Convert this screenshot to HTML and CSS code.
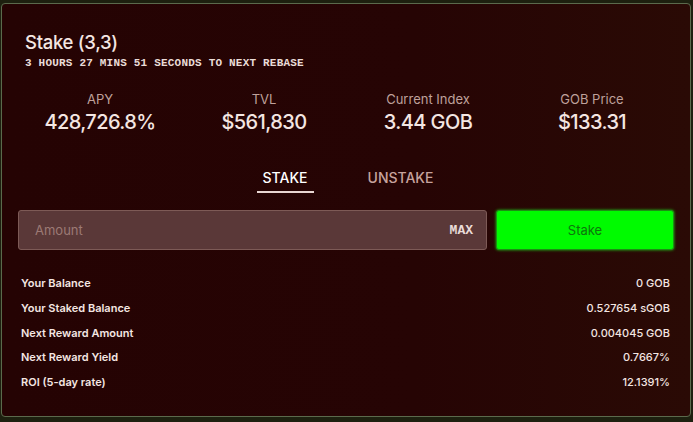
FILE: index.html
```html
<!DOCTYPE html>
<html lang="en">
<head>
    <meta charset="UTF-8">
    <meta name="viewport" content="width=device-width, initial-scale=1.0">
    <title>Stake</title>
    <link rel="stylesheet" href="styles.css">
</head>
<body>
    <div id="stake-card">
        <div class="card-header">
            <div class="card-title">Stake (3,3)</div>
            <div class="rebase-timer">3 HOURS 27 MINS 51 SECONDS TO NEXT REBASE</div>
        </div>

        <div class="metrics">
            <div class="metric">
                <div class="metric-label">APY</div>
                <div class="metric-value">428,726.8%</div>
            </div>
            <div class="metric">
                <div class="metric-label">TVL</div>
                <div class="metric-value">$561,830</div>
            </div>
            <div class="metric">
                <div class="metric-label">Current Index</div>
                <div class="metric-value">3.44 GOB</div>
            </div>
            <div class="metric">
                <div class="metric-label">GOB Price</div>
                <div class="metric-value">$133.31</div>
            </div>
        </div>

        <div class="tabs">
            <div class="tab active-tab">STAKE</div>
            <div class="tab">UNSTAKE</div>
        </div>

        <div class="stake-form">
            <div class="amount-box">
                <input type="text" id="amount-input" placeholder="Amount">
                <span class="max-button">MAX</span>
            </div>
            <button id="stake-button">Stake</button>
        </div>

        <div class="info-list">
            <div class="info-row"><span>Your Balance</span><span>0 GOB</span></div>
            <div class="info-row"><span>Your Staked Balance</span><span>0.527654 sGOB</span></div>
            <div class="info-row"><span>Next Reward Amount</span><span>0.004045 GOB</span></div>
            <div class="info-row"><span>Next Reward Yield</span><span>0.7667%</span></div>
            <div class="info-row"><span>ROI (5-day rate)</span><span>12.1391%</span></div>
        </div>
    </div>
</body>
</html>
```

FILE: styles.css
```css
body, html {
    height: 100%;
    margin: 0;
    font-family: Inter, "Noto Sans", sans-serif;
    background-color: #1d200f;
}
body {
    padding: 3px 2px 0 1px;
    box-sizing: border-box;
}
#stake-card {
    height: 414px;
    box-sizing: border-box;
    border: 1px solid #5b6a4c;
    border-radius: 4px;
    background: linear-gradient(90deg, #250303 0%, #260404 60%, #2a0a05 100%);
    padding: 0 16px;
    color: #f4e6e2;
}
.card-header {
    padding: 26px 0 0 7px;
}
.card-title {
    font-size: 18.5px;
    font-weight: 500;
    line-height: 24px;
    letter-spacing: -0.3px;
}
.rebase-timer {
    font-family: "Liberation Mono", monospace;
    font-size: 11px;
    font-weight: bold;
    letter-spacing: 0.2px;
    line-height: 14px;
    margin-top: 2px;
    color: #eadcd8;
}
.metrics {
    display: grid;
    grid-template-columns: repeat(4, 1fr);
    margin-top: 21px;
    text-align: center;
}
.metric-label {
    font-size: 13px;
    line-height: 16px;
    color: #bfa19b;
}
.metric-value {
    font-size: 20px;
    font-weight: 500;
    line-height: 24px;
    margin-top: 3px;
    letter-spacing: -0.6px;
}
.tabs {
    display: flex;
    justify-content: center;
    gap: 48px;
    margin-top: 35px;
    padding-left: 4px;
}
.tab {
    font-size: 14px;
    font-weight: 500;
    line-height: 18px;
    padding: 0 6px 4px;
    color: #c7a39d;
    border-bottom: 2px solid transparent;
}
.active-tab {
    color: #fff;
    border-bottom-color: #e9d6d2;
}
.stake-form {
    display: flex;
    gap: 9px;
    margin-top: 17px;
    height: 40px;
}
.amount-box {
    flex: 1;
    display: flex;
    align-items: center;
    background-color: #5a3838;
    border: 1px solid #7d5a56;
    border-radius: 3px;
    padding: 0 13px 0 16px;
}
#amount-input {
    flex: 1;
    background: none;
    border: none;
    outline: none;
    font-family: inherit;
    font-size: 13px;
    color: #f4e6e2;
    padding: 0;
}
#amount-input::placeholder {
    color: #9c7a75;
}
.max-button {
    font-family: "Liberation Mono", monospace;
    font-size: 13px;
    font-weight: bold;
    color: #eadcd8;
}
#stake-button {
    width: 178px;
    background-color: #00fb00;
    border: 1px solid #1c8f14;
    border-radius: 3px;
    font-family: inherit;
    font-size: 13px;
    color: #0e760d;
    box-shadow: 0 0 3px #1fcc1a;
    cursor: pointer;
}
.info-list {
    margin-top: 26px;
    padding: 0 4px 0 3px;
}
.info-row {
    display: flex;
    justify-content: space-between;
    font-size: 11px;
    font-weight: 600;
    line-height: 14px;
    margin-bottom: 10.8px;
    color: #f4e6e2;
}
.info-row span:last-child {
    font-weight: 500;
}
```
